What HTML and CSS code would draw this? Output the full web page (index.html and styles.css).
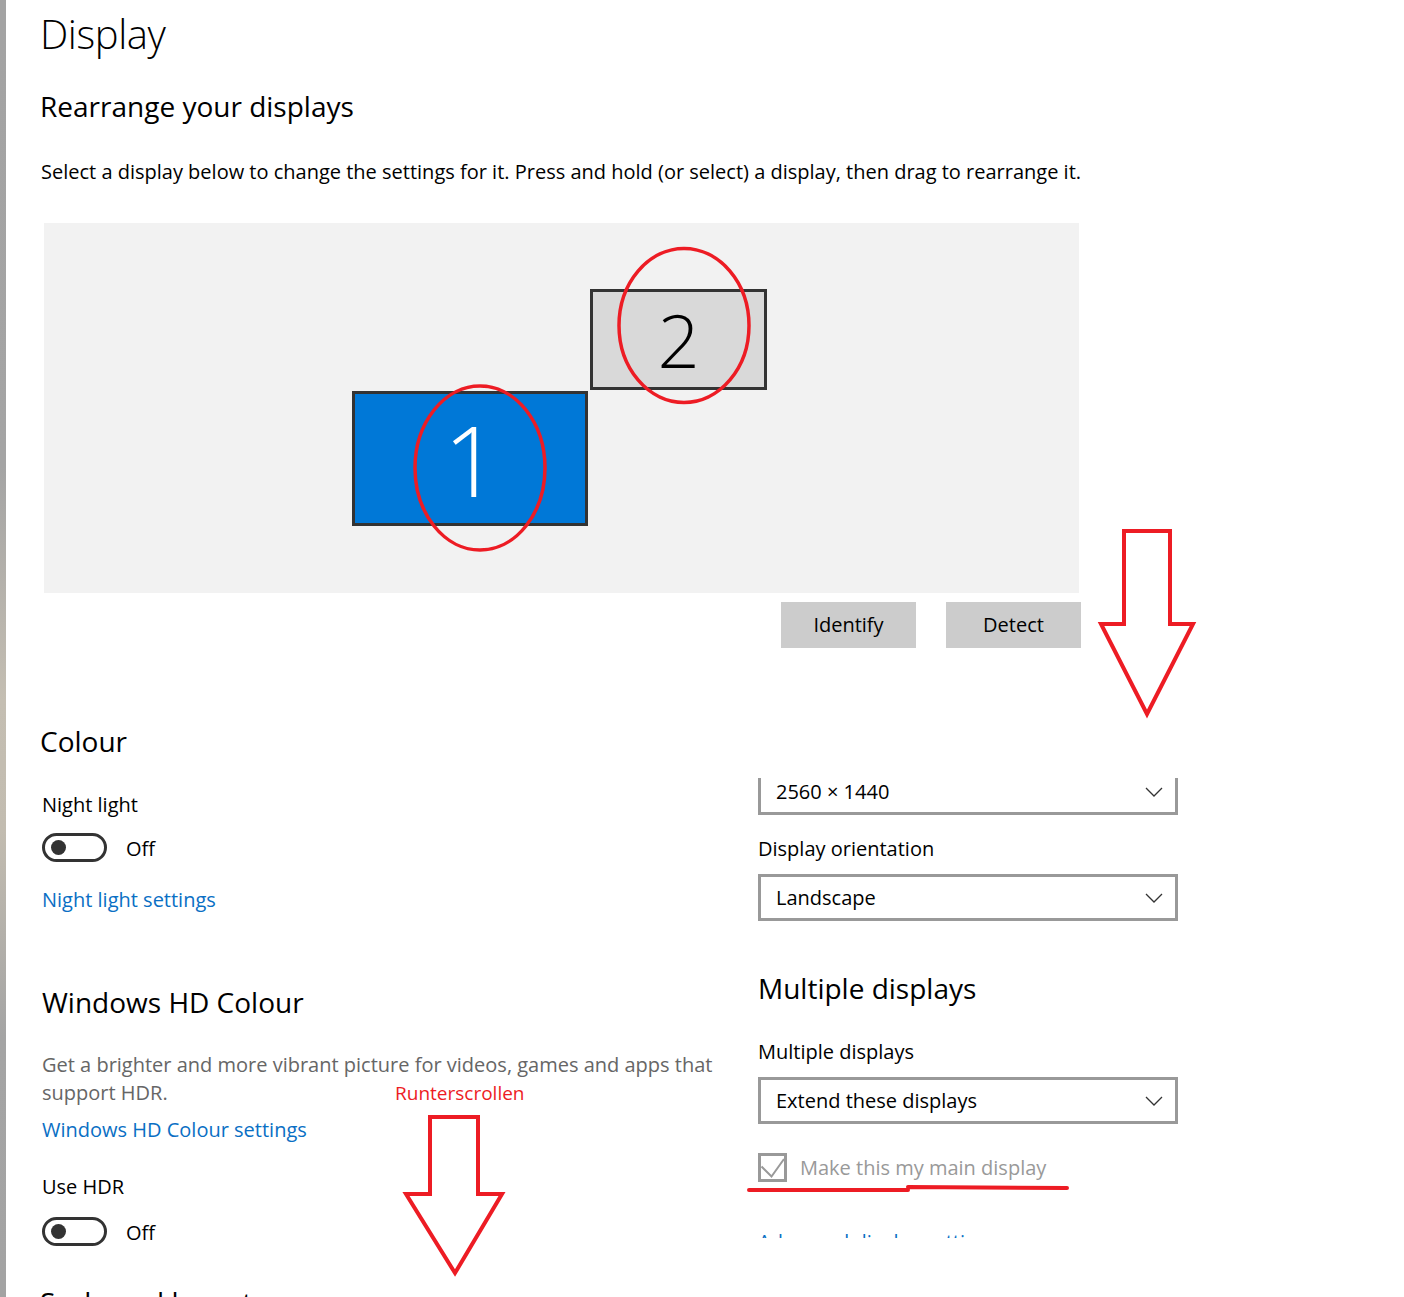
FILE: index.html
```html
<!DOCTYPE html>
<html lang="en">
<head>
    <meta charset="UTF-8">
    <meta name="viewport" content="width=device-width, initial-scale=1.0">
    <title>Display</title>

    <link rel="stylesheet" href="styles.css">
</head>
<body>
    <div class="edge"></div>
    <main class="page">
        <h1 class="title">Display</h1>
        <h2 class="heading rearrange">Rearrange your displays</h2>
        <p class="text intro">Select a display below to change the settings for it. Press and hold (or select) a display, then drag to rearrange it.</p>

        <div class="arrange">
            <div class="monitor monitor-one"><span>1</span></div>
            <div class="monitor monitor-two"><span>2</span></div>
        </div>

        <div class="actions">
            <button class="btn">Identify</button>
            <button class="btn">Detect</button>
        </div>

        <div class="columns">
            <div class="col-left">
                <h2 class="heading colour">Colour</h2>
                <p class="text night">Night light</p>
                <div class="toggle-row night-toggle">
                    <span class="toggle"><span class="knob"></span></span>
                    <span class="text state">Off</span>
                </div>
                <a class="text link night-link">Night light settings</a>

                <h2 class="heading hd">Windows HD Colour</h2>
                <p class="text muted">Get a brighter and more vibrant picture for videos, games and apps that support HDR.</p>
                <a class="text link hd-link">Windows HD Colour settings</a>
                <p class="text hdr">Use HDR</p>
                <div class="toggle-row hdr-toggle">
                    <span class="toggle"><span class="knob"></span></span>
                    <span class="text state">Off</span>
                </div>

                <h2 class="heading scale">Scale and layout</h2>
            </div>

            <div class="col-right">
                <div class="select first">
                    <span class="text">2560 × 1440</span>
                    <svg class="chevron" width="18" height="10" viewBox="0 0 18 10"><polyline points="1,1 9,9 17,1" /></svg>
                </div>
                <p class="text orient">Display orientation</p>
                <div class="select">
                    <span class="text">Landscape</span>
                    <svg class="chevron" width="18" height="10" viewBox="0 0 18 10"><polyline points="1,1 9,9 17,1" /></svg>
                </div>

                <h2 class="heading multi">Multiple displays</h2>
                <p class="text multi-label">Multiple displays</p>
                <div class="select">
                    <span class="text">Extend these displays</span>
                    <svg class="chevron" width="18" height="10" viewBox="0 0 18 10"><polyline points="1,1 9,9 17,1" /></svg>
                </div>

                <div class="check-row">
                    <span class="checkbox">
                        <svg width="23" height="23" viewBox="0 0 23 23"><polyline points="0.5,10.5 10.5,20.5 23,3" /></svg>
                    </span>
                    <span class="text check-label">Make this my main display</span>
                </div>
                <a class="text link advanced">Advanced display settings</a>
            </div>
        </div>
    </main>

    <!-- red markings drawn over the screenshot -->
    <svg class="marks" width="1404" height="1297" viewBox="0 0 1404 1297">
        <ellipse cx="480" cy="468" rx="65" ry="82" />
        <ellipse cx="684" cy="325.5" rx="65" ry="77" />
        <polygon points="1124,531 1170,531 1170,624 1193,624 1147,714 1101,624 1124,624" />
        <polygon points="430,1117 478,1117 478,1194 502,1194 455,1273 406,1194 430,1194" />
        <path class="underline" d="M749 1190 L908 1190 M908 1187 L1067 1188" />
    </svg>
    <div class="note">Runterscrollen</div>
</body>
</html>
```

FILE: styles.css
```css
*, *:before, *:after{
    margin: 0;
    padding: 0;
    box-sizing: border-box;
}
body{
    position: relative;
    display: flex;
    height: 1297px;
    overflow: hidden;
    background: #fff;
    color: #000;
    font-family: "Open Sans", "Noto Sans", sans-serif;
}
.edge{
    width: 6px;
    flex-shrink: 0;
    background: linear-gradient(to bottom, #a3a3a3 0, #a4a4a4 36%, #c4beb2 54%, #c2bcb0 64%, #a4a4a4 80%, #a3a3a3 100%);
}
.page{
    flex: 1;
    padding-left: 34px;
}
.title{
    margin-top: 6px;
    font-size: 40px;
    line-height: 56px;
    font-weight: 300;
    letter-spacing: -0.4px;
}
.heading{
    font-size: 28px;
    line-height: 40px;
    font-weight: 400;
}
.text{
    font-size: 20px;
    line-height: 28px;
}
.rearrange{
    margin-top: 24px;
}
.intro{
    margin-top: 32px;
    margin-left: 1px;
}
.arrange{
    position: relative;
    margin-top: 37px;
    margin-left: 4px;
    width: 1035px;
    height: 370px;
    background: #f2f2f2;
}
.monitor{
    position: absolute;
    display: flex;
    align-items: center;
    justify-content: center;
    border: 3px solid #333;
    font-weight: 300;
    line-height: 1;
}
.monitor-one{
    left: 308px;
    top: 168px;
    width: 236px;
    height: 135px;
    background: #0078d7;
    color: #fff;
    font-size: 98px;
}
.monitor-one span{
    margin-left: 3px;
}
.monitor-two{
    left: 546px;
    top: 66px;
    width: 177px;
    height: 101px;
    background: #d9d9d9;
    color: #000;
    font-size: 74px;
}
.actions{
    display: flex;
    gap: 30px;
    margin-top: 9px;
    margin-left: 741px;
}
.btn{
    width: 135px;
    height: 46px;
    border: 0;
    background: #ccc;
    color: #000;
    font-family: inherit;
    font-size: 20px;
    line-height: 46px;
}
.columns{
    display: grid;
    grid-template-columns: 718px 420px;
    margin-top: 73px;
}

/* left column */
.col-left .text, .col-left .toggle-row, .col-left .hd{
    margin-left: 2px;
}
.night{
    margin-top: 30px;
}
.toggle-row{
    display: flex;
    align-items: center;
    height: 29px;
}
.night-toggle{
    margin-top: 14px;
}
.hdr-toggle{
    margin-top: 16px;
}
.toggle{
    display: flex;
    align-items: center;
    width: 65px;
    height: 29px;
    border: 3px solid #333;
    border-radius: 15px;
    padding-left: 6px;
}
.knob{
    width: 15px;
    height: 15px;
    border-radius: 50%;
    background: #333;
}
.col-left .toggle-row .state{
    margin-left: 19px;
    padding-top: 3px;
}
.link{
    display: block;
    color: #0a6fc4;
}
.night-link{
    margin-top: 24px;
}
.hd{
    margin-top: 68px;
}
.muted{
    margin-top: 29px;
    max-width: 690px;
    color: #666;
}
.hd-link{
    margin-top: 9px;
}
.hdr{
    margin-top: 29px;
}
.scale{
    margin-top: 36px;
}

/* right column */
.col-right{
    margin-top: 57px;
    height: 460px;
    overflow: hidden;
}
.select{
    display: flex;
    align-items: center;
    justify-content: space-between;
    height: 47px;
    margin-top: 11px;
    padding: 0 12px 0 15px;
    border: 3px solid #999;
}
.select.first{
    margin-top: -10px;
}
.chevron polyline{
    fill: none;
    stroke: #333;
    stroke-width: 1.3;
}
.orient{
    margin-top: 20px;
}
.multi{
    margin-top: 47px;
}
.multi-label{
    margin-top: 30px;
}
.check-row{
    display: flex;
    align-items: center;
    margin-top: 29px;
    height: 29px;
}
.checkbox{
    width: 29px;
    height: 29px;
    border: 3px solid #999;
}
.checkbox svg{
    display: block;
    overflow: visible;
}
.checkbox polyline{
    fill: none;
    stroke: #999;
    stroke-width: 2;
}
.check-label{
    margin-left: 13px;
    line-height: 29px;
    color: #999;
}
.advanced{
    margin-top: 46px;
}

/* annotations */
.marks{
    position: absolute;
    left: 0;
    top: 0;
    pointer-events: none;
}
.marks ellipse, .marks polygon{
    fill: none;
    stroke: #ed1c24;
    stroke-width: 3.5;
}
.marks polygon{
    stroke-width: 4;
}
.marks .underline{
    fill: none;
    stroke: #ed1c24;
    stroke-width: 4;
    stroke-linecap: round;
}
.note{
    position: absolute;
    left: 395px;
    top: 1080px;
    font-size: 19px;
    line-height: 26px;
    color: #ed1c24;
}
```
